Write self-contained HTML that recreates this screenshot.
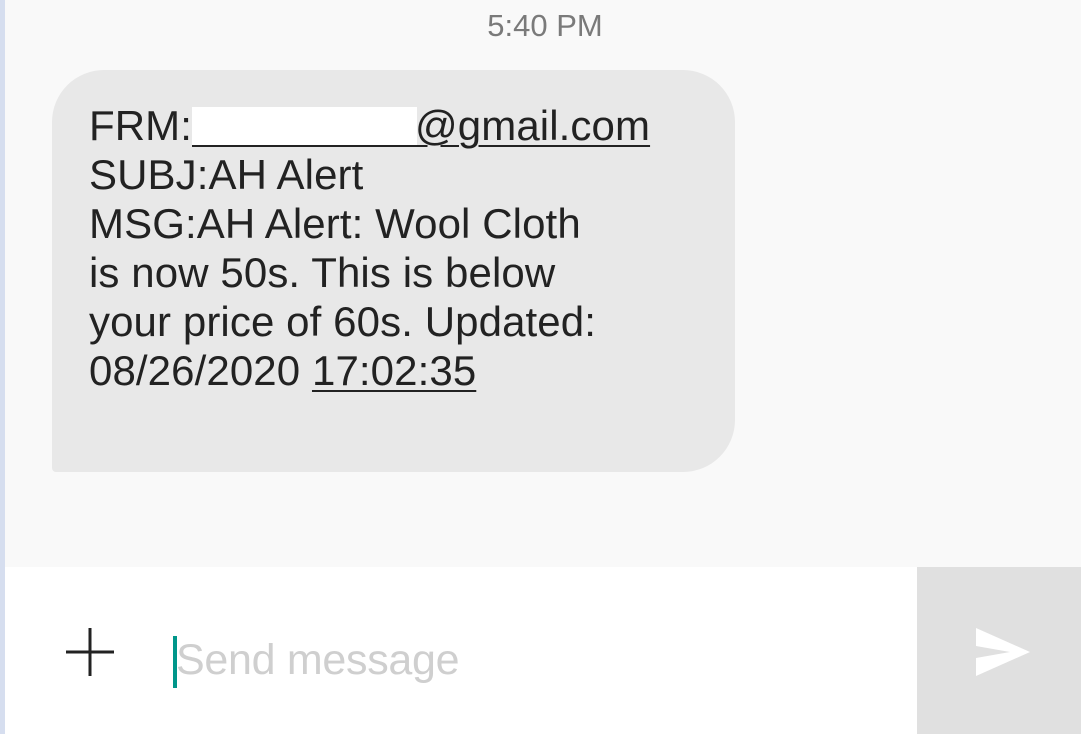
<!DOCTYPE html>
<html><head><style>
body{margin:0;width:1081px;height:734px;overflow:hidden;background:#f9f9f9;font-family:"Liberation Sans",sans-serif;position:relative}
.strip{position:absolute;left:0;top:0;width:5px;height:734px;background:#d6deef}
.time{position:absolute;left:0;width:1090px;top:8px;text-align:center;font-size:31px;color:#7a7a7a}
.bubble{position:absolute;left:52px;top:70px;width:683px;height:402px;background:#e8e8e8;border-radius:52px 52px 52px 4px}
.txt{position:absolute;left:89px;top:101px;font-size:42px;line-height:49px;color:#222;white-space:pre;letter-spacing:0.1px}
.red{display:inline-block;width:225px;height:38px;background:#fff;vertical-align:-7px;border-bottom:2px solid #222;margin-right:-2px}
u{text-decoration-thickness:2px;text-underline-offset:5px}
.input{position:absolute;left:5px;top:567px;width:912px;height:167px;background:#fff}
.send{position:absolute;left:917px;top:567px;width:164px;height:167px;background:#e0e0e0}
.cursor{position:absolute;left:173px;top:636px;width:4px;height:52px;background:#00968a}
.ph{position:absolute;left:176px;top:636px;font-size:43px;color:#cfcfcf;letter-spacing:-0.3px}
</style></head><body>
<div class="strip"></div>
<div class="time">5:40 PM</div>
<div class="bubble"></div>
<div class="txt">FRM:<span class="red"></span><u>@gmail.com</u>
SUBJ:AH Alert
MSG:AH Alert: Wool Cloth
is now 50s. This is below
your price of 60s. Updated:
08/26/2020 <u>17:02:35</u></div>
<div class="input"></div>
<div class="send"></div>
<svg style="position:absolute;left:60px;top:622px" width="60" height="60"><path d="M30 6V54M6 30H54" stroke="#222" stroke-width="3"/></svg>
<div class="cursor"></div>
<div class="ph">Send message</div>
<svg style="position:absolute;left:970px;top:624px" width="66" height="56"><path d="M6 4L60 28L6 52L6 34L40 28L6 22Z" fill="#fff"/></svg>
</body></html>
